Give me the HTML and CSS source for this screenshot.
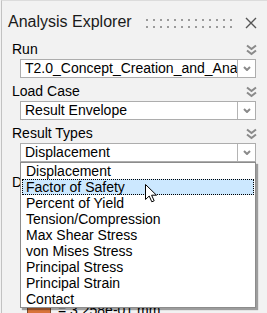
FILE: index.html
```html
<!DOCTYPE html>
<html lang="en">
<head>
    <meta charset="UTF-8">
    <meta name="viewport" content="width=device-width, initial-scale=1.0">
    <title>Analysis Explorer</title>
    <link rel="stylesheet" href="styles.css">
</head>
<body>
    <div class="panel">
        <header class="titlebar">
            <h1>Analysis Explorer</h1>
            <svg class="grip" width="86" height="14" viewBox="0 0 86 14">
                <defs>
                    <pattern id="dots" width="7" height="7" patternUnits="userSpaceOnUse">
                        <rect x="0" y="3" width="2" height="2" fill="#9b9b9b"/>
                    </pattern>
                </defs>
                <rect width="86" height="14" fill="url(#dots)"/>
            </svg>
            <svg class="close" width="12" height="12" viewBox="0 0 12 12">
                <path d="M1 1 L11 11 M11 1 L1 11" stroke="#555" stroke-width="1.4" fill="none"/>
            </svg>
        </header>

        <section class="field">
            <div class="field-head">
                <label>Run</label>
                <svg class="collapse" width="13" height="12" viewBox="0 0 13 12"><path d="M2 1.5 L6.5 5 L11 1.5 M2 6.5 L6.5 10 L11 6.5" stroke="#8a8a8a" stroke-width="2" fill="none"/></svg>
            </div>
            <div class="select">
                <span class="value">T2.0_Concept_Creation_and_Analysis</span>
                <span class="btn"><svg width="8" height="5" viewBox="0 0 8 5"><path d="M1 1 L4 4 L7 1" stroke="#8a8a8a" stroke-width="2" fill="none"/></svg></span>
            </div>
        </section>

        <section class="field">
            <div class="field-head">
                <label>Load Case</label>
                <svg class="collapse" width="13" height="12" viewBox="0 0 13 12"><path d="M2 1.5 L6.5 5 L11 1.5 M2 6.5 L6.5 10 L11 6.5" stroke="#8a8a8a" stroke-width="2" fill="none"/></svg>
            </div>
            <div class="select">
                <span class="value">Result Envelope</span>
                <span class="btn"><svg width="8" height="5" viewBox="0 0 8 5"><path d="M1 1 L4 4 L7 1" stroke="#8a8a8a" stroke-width="2" fill="none"/></svg></span>
            </div>
        </section>

        <section class="field">
            <div class="field-head">
                <label>Result Types</label>
                <svg class="collapse" width="13" height="12" viewBox="0 0 13 12"><path d="M2 1.5 L6.5 5 L11 1.5 M2 6.5 L6.5 10 L11 6.5" stroke="#8a8a8a" stroke-width="2" fill="none"/></svg>
            </div>
            <div class="select open">
                <span class="value">Displacement</span>
                <span class="btn"><svg width="8" height="5" viewBox="0 0 8 5"><path d="M1 1 L4 4 L7 1" stroke="#8a8a8a" stroke-width="2" fill="none"/></svg></span>
                <ul class="options">
                    <li>Displacement</li>
                    <li class="hover">Factor of Safety</li>
                    <li>Percent of Yield</li>
                    <li>Tension/Compression</li>
                    <li>Max Shear Stress</li>
                    <li>von Mises Stress</li>
                    <li>Principal Stress</li>
                    <li>Principal Strain</li>
                    <li>Contact</li>
                </ul>
                <svg class="cursor" width="13" height="19" viewBox="0 0 13 19">
                    <path d="M0.5 0.5 V15.5 L4.2 12 L6.8 17.8 L9.2 16.8 L6.6 11.2 H11.5 Z" fill="#fff" stroke="#000" stroke-width="1" stroke-linejoin="miter"/>
                </svg>
            </div>
        </section>

        <section class="field display">
            <div class="field-head">
                <label>Display</label>
            </div>
        </section>

        <div class="legend">
            <span class="swatch"></span>
            <span>= 3.258e-01 mm</span>
        </div>
    </div>
</body>
</html>
```

FILE: styles.css
```css
* {
    margin: 0;
    padding: 0;
    box-sizing: border-box;
}

body {
    font-family: "Liberation Sans", Arial, sans-serif;
    font-size: 14px;
    color: #000;
    background: #f2f2f2;
    overflow: hidden;
}

.panel {
    height: 313px;
    margin-left: 1px;
    border-left: 1px solid #c2c2c2;
    border-top: 1px solid #dcdcdc;
    padding: 0 9px 0 6px;
    overflow: hidden;
}

/* title bar */
.titlebar {
    display: flex;
    align-items: center;
    padding-top: 11px;
    height: 31px;
}

.titlebar h1 {
    font-size: 16px;
    font-weight: normal;
    line-height: 20px;
    color: #1a1a1a;
}

.grip {
    margin-left: auto;
    margin-top: 1px;
}

.close {
    margin-left: 13px;
    margin-right: 1px;
    margin-top: 2px;
}

/* fields */
.field {
    margin-top: 9px;
}

.field + .field {
    margin-top: 5px;
}

.field-head {
    display: flex;
    justify-content: space-between;
    align-items: center;
    height: 16px;
    padding-left: 4px;
}

.field-head label {
    line-height: 16px;
}

.collapse {
    margin-top: 1px;
}

.select {
    position: relative;
    display: flex;
    width: 236px;
    height: 19px;
    margin: 2px 0 0 12px;
    border: 1px solid #adadad;
    background: #fff;
}

.select .value {
    flex: 1;
    padding-left: 4px;
    line-height: 17px;
    white-space: nowrap;
    overflow: hidden;
}

.select .btn {
    width: 18px;
    border-left: 1px solid #b4b4b4;
    display: flex;
    align-items: center;
    justify-content: center;
}

/* open dropdown */
.options {
    position: absolute;
    left: -1px;
    top: 18px;
    width: 236px;
    list-style: none;
    background: #fff;
    border: 1px solid #8c8c8c;
    padding: 0 1px;
    box-shadow: 2px 2px 1px rgba(0, 0, 0, 0.35);
    z-index: 2;
}

.options li {
    height: 16px;
    line-height: 16px;
    padding-left: 3px;
    border: 1px solid transparent;
    display: flex;
    align-items: center;
}

.options li.hover {
    background: #cce8ff;
    border: 1px dotted #000;
}

.cursor {
    position: absolute;
    left: 124px;
    top: 40px;
    z-index: 3;
}

.field.display {
    margin-top: 12px;
}

/* legend hidden under the dropdown */
.legend {
    display: flex;
    align-items: center;
    gap: 7px;
    margin: 112px 0 0 19px;
    line-height: 16px;
}

.swatch {
    width: 24px;
    height: 16px;
    background: #d8743a;
    border: 1px solid #7a4a2a;
}
```
